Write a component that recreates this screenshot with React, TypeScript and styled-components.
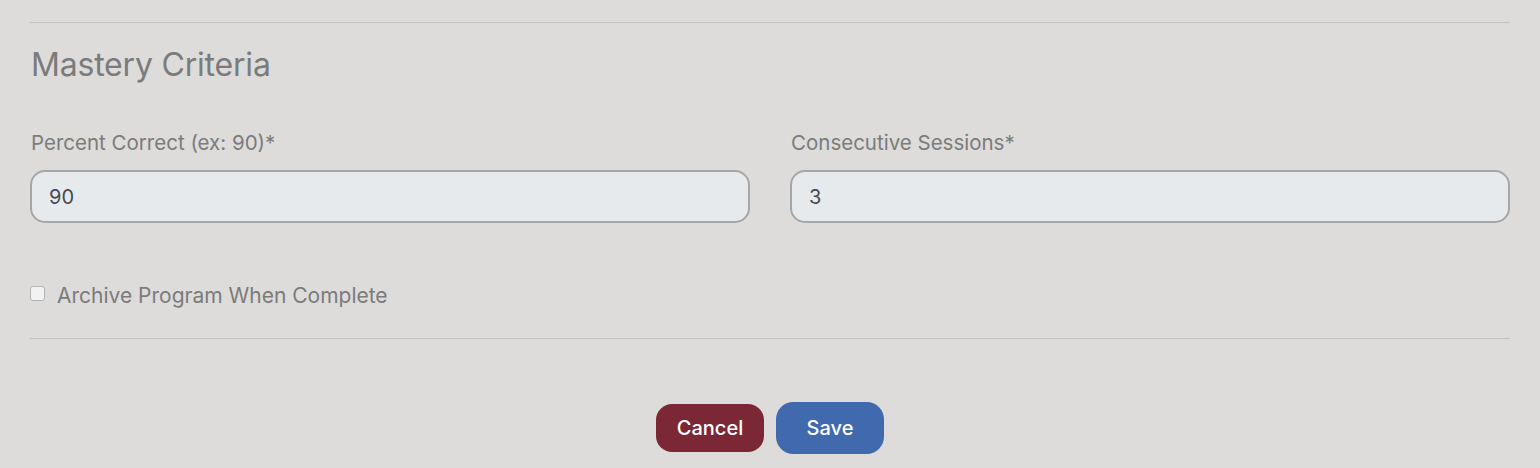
import React from "react";
import styled, { createGlobalStyle } from "styled-components";

const Global = createGlobalStyle`
  html, body { margin: 0; padding: 0; background: #dddcda; }
  body { font-family: Inter, "Liberation Sans", sans-serif; }
`;

const Page = styled.div`
  padding: 0 30px;
  box-sizing: border-box;
  width: 1540px;
  height: 468px;
`;

const Divider = styled.hr<{ $top: number }>`
  border: 0;
  border-top: 1px solid #c3c2c0;
  margin: ${(p) => p.$top}px 0 0 0;
  height: 0;
`;

const Heading = styled.h2`
  margin: 24px 0 0 1px;
  font-size: 32px;
  font-weight: 400;
  color: #7b7b7b;
  line-height: 36px;
  letter-spacing: -0.2px;
`;

const Row = styled.div`
  display: grid;
  grid-template-columns: 1fr 1fr;
  column-gap: 40px;
  margin-top: 48px;
`;

const Field = styled.div`
  display: flex;
  flex-direction: column;
`;

const Label = styled.label`
  font-size: 20.5px;
  color: #7b7b7b;
  line-height: 24px;
  margin-left: 1px;
`;

const Input = styled.input`
  margin-top: 15px;
  height: 53px;
  box-sizing: border-box;
  border: 2px solid #a6a6a6;
  border-radius: 15px;
  background: #e7eaed;
  padding: 0 17px;
  font-family: inherit;
  font-size: 20px;
  color: #454a52;
  outline: none;
`;

const CheckRow = styled.label`
  display: flex;
  align-items: center;
  gap: 12px;
  margin-top: 60px;
  font-size: 21px;
  line-height: 26px;
  color: #7b7b7b;
`;

const Box = styled.span`
  width: 13px;
  height: 13px;
  border: 1px solid #b4b4b4;
  border-radius: 3px;
  background: #f2f2f2;
  margin-top: -6px;
`;

const Buttons = styled.div`
  display: flex;
  justify-content: center;
  align-items: center;
  gap: 12px;
  margin-top: 63px;
`;

const Button = styled.button<{ $bg: string; $h: number }>`
  width: 108px;
  height: ${(p) => p.$h}px;
  border: 0;
  border-radius: ${(p) => p.$h / 3}px;
  background: ${(p) => p.$bg};
  color: #ffffff;
  font-family: inherit;
  font-size: 20px;
  font-weight: 500;
`;

export default function App() {
  return (
    <Page>
      <Global />
      <Divider $top={22} />
      <Heading>Mastery Criteria</Heading>
      <Row>
        <Field>
          <Label>Percent Correct (ex: 90)*</Label>
          <Input defaultValue="90" />
        </Field>
        <Field>
          <Label>Consecutive Sessions*</Label>
          <Input defaultValue="3" />
        </Field>
      </Row>
      <CheckRow>
        <Box />
        Archive Program When Complete
      </CheckRow>
      <Divider $top={29} />
      <Buttons>
        <Button $bg="#7c2735" $h={48}>Cancel</Button>
        <Button $bg="#4169ae" $h={52}>Save</Button>
      </Buttons>
    </Page>
  );
}
